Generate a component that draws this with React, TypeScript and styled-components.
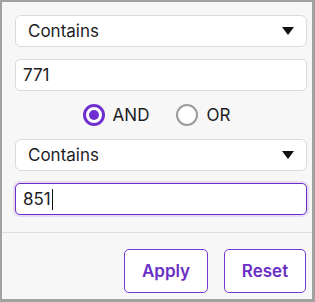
import React from "react";
import styled, { createGlobalStyle } from "styled-components";

const Global = createGlobalStyle`
  html, body { margin: 0; padding: 0; background: #f8f8f8; }
  * { box-sizing: border-box; }
`;

const Frame = styled.div`
  width: 315px;
  height: 302px;
  border-style: solid;
  border-color: #a2a2a2;
  border-width: 2px 3px 3px 2px;
  background: #f7f7f7;
  font-family: Inter, "Noto Sans", sans-serif;
  color: #1d1d1f;
  display: flex;
  flex-direction: column;
`;

const Body = styled.div`
  display: flex;
  flex-direction: column;
  gap: 12px;
  padding: 13px 5px 17px 13px;
  border-bottom: 1px solid #dddde6;
`;

const SelectBox = styled.div`
  height: 32px;
  border: 1px solid #dbd9e4;
  border-radius: 6px;
  background: #fff;
  display: flex;
  align-items: center;
  justify-content: space-between;
  padding: 0 12px 0 12px;
  font-size: 17px;
`;

const Caret = styled.svg`
  width: 12px;
  height: 8px;
  display: block;
`;

const Field = styled.div<{ $focused?: boolean }>`
  height: 32px;
  border: ${(p) => (p.$focused ? "1.5px solid #6c2cc9" : "1px solid #dbd9e4")};
  box-shadow: ${(p) => (p.$focused ? "0 0 0 2px #e4dcf3" : "none")};
  border-radius: 5px;
  background: #fff;
  display: flex;
  align-items: center;
  padding: 0 7px;
  font-size: 17px;
`;

const TextCaret = styled.span`
  display: inline-block;
  width: 1px;
  height: 21px;
  background: #111;
  margin-left: 1px;
`;

const RadioRow = styled.div`
  height: 24px;
  display: flex;
  justify-content: center;
  align-items: center;
  gap: 27px;
  padding-right: 9px;
`;

const RadioLabel = styled.label`
  display: flex;
  align-items: center;
  gap: 8px;
  font-size: 17px;
`;

const RadioDot = styled.span<{ $checked?: boolean }>`
  width: 22px;
  height: 22px;
  border-radius: 50%;
  border: ${(p) => (p.$checked ? "3px solid #6f2fd0" : "2.5px solid #9c9c9c")};
  background: #fff;
  display: flex;
  align-items: center;
  justify-content: center;
  &::after {
    content: "";
    width: 10px;
    height: 10px;
    border-radius: 50%;
    background: ${(p) => (p.$checked ? "#6f2fd0" : "transparent")};
  }
`;

const Footer = styled.div`
  display: flex;
  justify-content: flex-end;
  gap: 16px;
  padding: 16px 6px 0 0;
`;

const Button = styled.button<{ $w: number }>`
  width: ${(p) => p.$w}px;
  height: 44px;
  border: 1px solid #7438d2;
  border-radius: 5px;
  background: #fff;
  color: #6a2fc4;
  font-family: Inter, "Noto Sans", sans-serif;
  font-weight: 600;
  font-size: 17px;
  padding: 0;
  cursor: pointer;
`;

function Select({ label }: { label: string }) {
  return (
    <SelectBox>
      <span>{label}</span>
      <Caret viewBox="0 0 12 8">
        <path d="M0 0 H12 L6 8 Z" fill="#111" />
      </Caret>
    </SelectBox>
  );
}

export default function App() {
  return (
    <>
      <Global />
      <Frame>
        <Body>
          <Select label="Contains" />
          <Field>771</Field>
          <RadioRow>
            <RadioLabel>
              <RadioDot $checked />
              AND
            </RadioLabel>
            <RadioLabel>
              <RadioDot />
              OR
            </RadioLabel>
          </RadioRow>
          <Select label="Contains" />
          <Field $focused>
            851
            <TextCaret />
          </Field>
        </Body>
        <Footer>
          <Button $w={84}>Apply</Button>
          <Button $w={82}>Reset</Button>
        </Footer>
      </Frame>
    </>
  );
}
